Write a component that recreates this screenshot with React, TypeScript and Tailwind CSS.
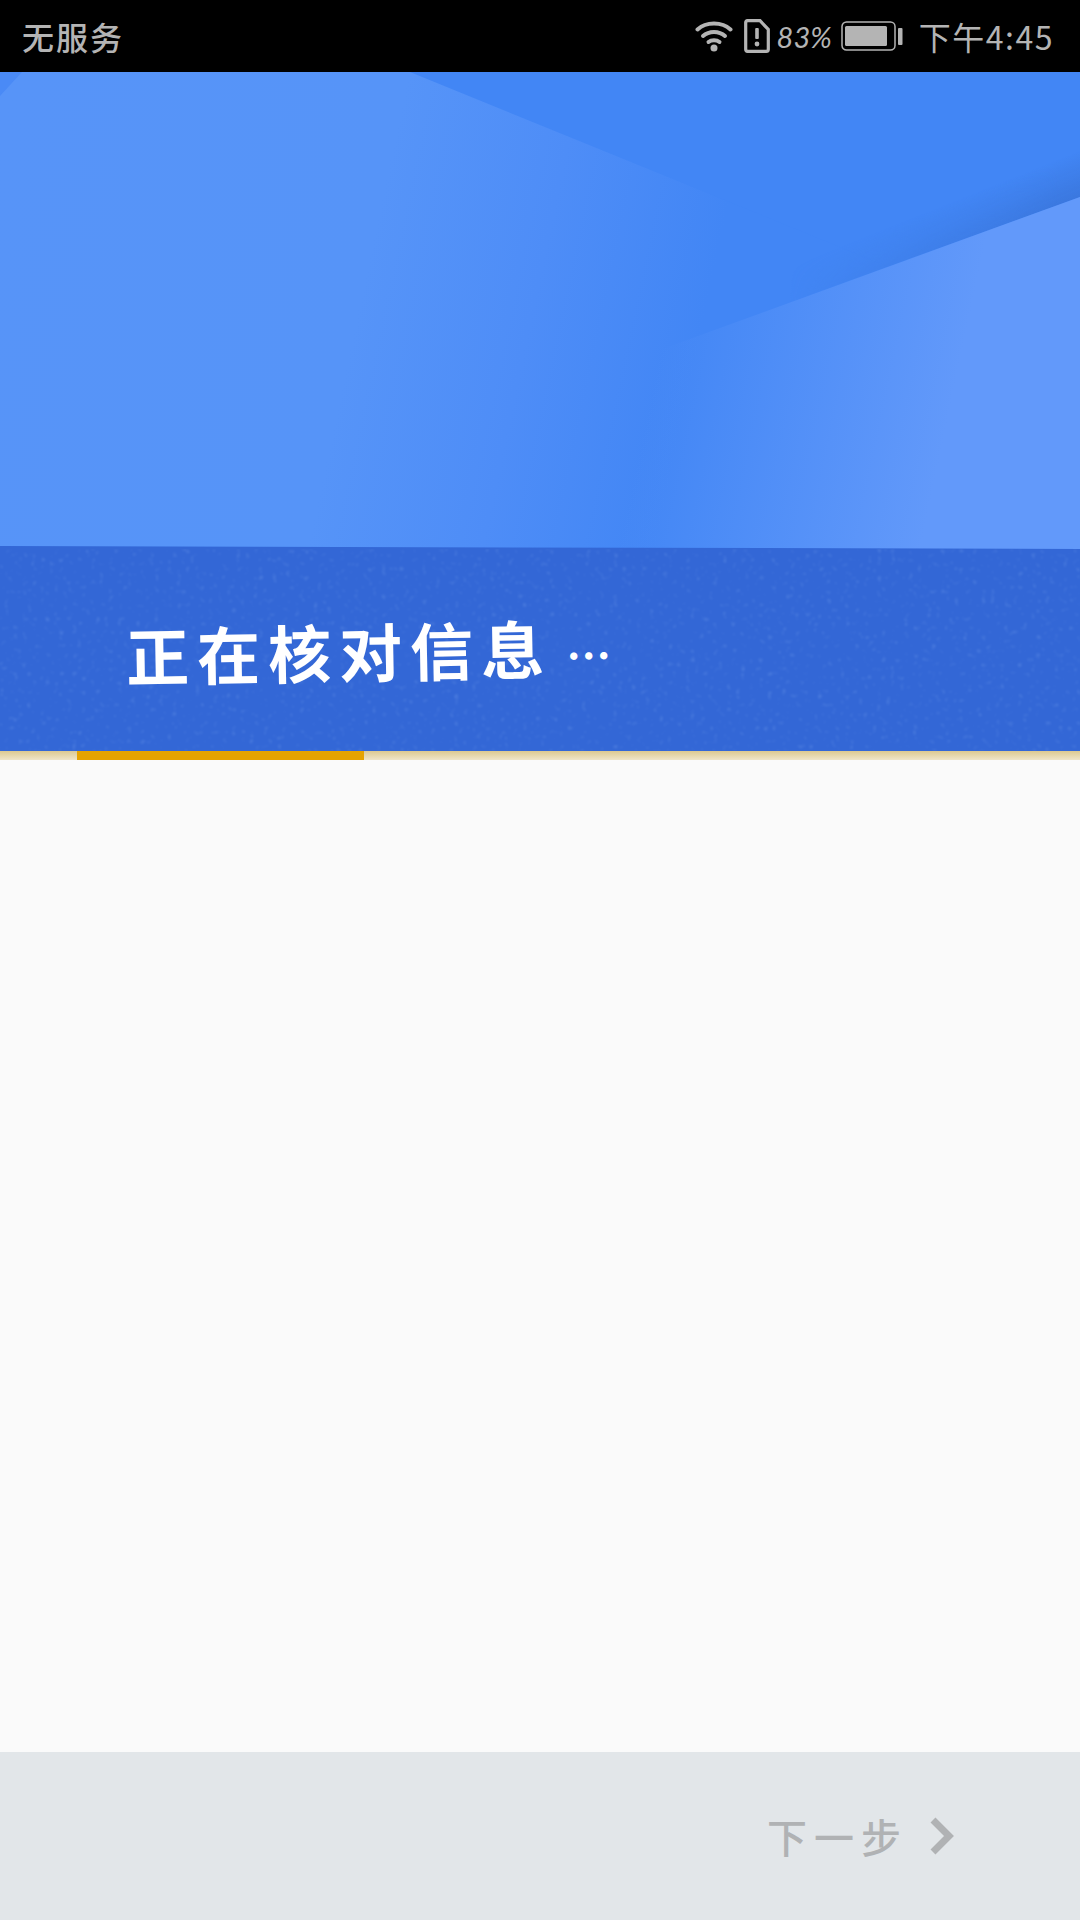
import React from "react";

const FONT = "[font-family:'Noto_Sans_CJK_SC','Noto_Sans',sans-serif]";

function Wifi() {
  return (
    <svg width="38" height="32" viewBox="0 0 38 32" fill="none" stroke="#b4b4b4" strokeWidth="4" strokeLinecap="round">
      <path d="M2.500 9.500C11 1.500 27 1.500 35.500 9.500" />
      <path d="M8 16C14 10.500 24 10.500 30 16" />
      <path d="M13.500 22C16.500 19.500 21.500 19.500 24.500 22" />
      <circle cx="19" cy="28" r="3.500" fill="#b4b4b4" stroke="none" />
    </svg>
  );
}

function Sim() {
  return (
    <svg width="26" height="34" viewBox="0 0 26 34" fill="none">
      <path d="M3.500 1.700H16L24.300 10.500V30.500A2 2 0 0 1 22.300 32.300H3.500A2 2 0 0 1 1.700 30.500V3.500A2 2 0 0 1 3.500 1.700Z" stroke="#b4b4b4" strokeWidth="3.200" />
      <rect x="11.200" y="9" width="3.600" height="11" rx="1" fill="#b4b4b4" />
      <circle cx="13" cy="25" r="2.400" fill="#b4b4b4" />
    </svg>
  );
}

function Battery() {
  return (
    <svg width="62" height="30" viewBox="0 0 62 30" fill="none">
      <rect x="1" y="1" width="53" height="28" rx="4.500" stroke="#b4b4b4" strokeWidth="1.500" />
      <rect x="4" y="5" width="42" height="20" rx="1.500" fill="#b4b4b4" />
      <rect x="57" y="7" width="4.500" height="17" rx="1" fill="#b4b4b4" />
    </svg>
  );
}

function HeroArt() {
  return (
    <svg className="absolute inset-0" width="1080" height="477" viewBox="0 0 1080 477">
      <defs>
        <linearGradient id="light" gradientUnits="userSpaceOnUse" x1="655" y1="305" x2="944" y2="366">
          <stop offset="0" stopColor="#6299fa" stopOpacity="0" />
          <stop offset="1" stopColor="#6299fa" stopOpacity="1" />
        </linearGradient>
        <linearGradient id="shade" gradientUnits="userSpaceOnUse" x1="1080" y1="125" x2="1064" y2="85">
          <stop offset="0" stopColor="#3a76dc" stopOpacity="0.9" />
          <stop offset="1" stopColor="#3a76dc" stopOpacity="0" />
        </linearGradient>
        <linearGradient id="fade" gradientUnits="userSpaceOnUse" x1="790" y1="0" x2="1060" y2="0">
          <stop offset="0" stopColor="#000" />
          <stop offset="1" stopColor="#fff" />
        </linearGradient>
        <mask id="shadeMask" maskUnits="userSpaceOnUse" x="0" y="0" width="1080" height="477">
          <rect width="1080" height="477" fill="url(#fade)" />
        </mask>
      </defs>
      <polygon points="0,0 22,0 0,24" fill="#4a8af6" />
      <polygon points="410,0 1080,0 1080,125 889,195" fill="#4286f5" />
      <polygon points="1080,125 760,241 760,130 1080,40" fill="url(#shade)" mask="url(#shadeMask)" />
      <polygon points="1080,125 1080,477 585,477 585,305" fill="url(#light)" />
      <polygon points="0,474 1080,477 0,477" fill="#3367d6" />
    </svg>
  );
}

function Noise() {
  return (
    <svg className="absolute inset-0" width="1080" height="202">
      <filter id="speck" x="0" y="0" width="100%" height="100%">
        <feTurbulence type="fractalNoise" baseFrequency="0.22" numOctaves="2" seed="4" />
        <feColorMatrix values="0 0 0 0 0.3  0 0 0 0 0.5  0 0 0 0 0.92  0 0 0 5 -3.100" />
        <feGaussianBlur stdDeviation="1" />
      </filter>
      <rect width="1080" height="202" filter="url(#speck)" opacity="0.22" />
    </svg>
  );
}

export default function App() {
  return (
    <div className={`flex h-[1920px] w-[1080px] flex-col overflow-hidden bg-[#fafafa] ${FONT}`}>
      <div className="flex h-[72px] shrink-0 items-center justify-between bg-black pl-[22px] pr-[26px] text-[#b4b4b4]">
        <span className="text-[32px] font-medium leading-none tracking-[2px]">无服务</span>
        <div className="flex items-center">
          <Wifi />
          <div className="ml-[11px]">
            <Sim />
          </div>
          <span className="ml-[7px] font-['Lato',sans-serif] text-[29px] italic leading-none">83%</span>
          <div className="ml-[9px]">
            <Battery />
          </div>
          <span className="ml-[16px] text-[32px] leading-none tracking-[1.5px]">下午4:45</span>
        </div>
      </div>

      <div className="relative h-[477px] shrink-0 bg-[linear-gradient(102deg,#5794f8_0,#5694f8_400px,#4e8df7_570px,#4286f5_740px,#4286f5_100%)]">
        <HeroArt />
      </div>

      <div className="relative flex h-[202px] shrink-0 items-center bg-[#3367d6] pb-[2px] pl-[126px]">
        <Noise />
        <span className="relative -rotate-1 text-[63px] font-bold leading-none tracking-[8px] text-white">
          正在核对信息<span className="ml-[14px] text-[45px] tracking-normal">…</span>
        </span>
      </div>

      <div className="h-[9px] shrink-0 bg-[linear-gradient(180deg,#dcc990,#efe5c9)] pl-[77px]">
        <div className="h-full w-[287px] bg-[#e5a300]" />
      </div>

      <div className="flex-1 bg-[#fafafa]" />

      <div className="flex h-[168px] shrink-0 items-center justify-end bg-[#e2e6e9] pr-[126px] text-[#b0b2b4]">
        <span className="text-[40px] font-medium leading-none tracking-[7px]">下一步</span>
        <svg className="ml-[22px]" width="24" height="38" viewBox="0 0 24 38" fill="none">
          <polyline points="3,3 19,19 3,35" stroke="#b0b2b4" strokeWidth="7" />
        </svg>
      </div>
    </div>
  );
}
